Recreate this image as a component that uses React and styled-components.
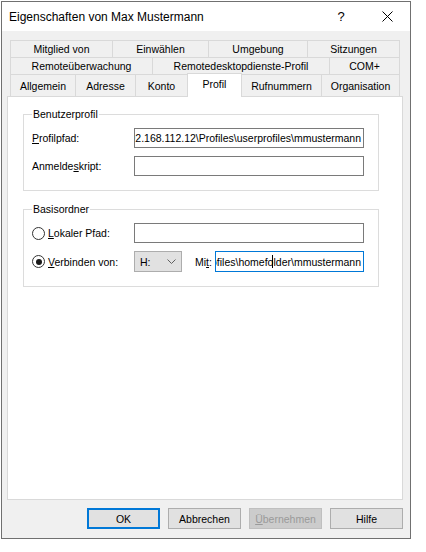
import styled, { createGlobalStyle } from 'styled-components';

const Global = createGlobalStyle`
  body {
    margin: 0;
    background: #fff;
    font-family: "Liberation Sans", Arial, sans-serif;
    font-size: 10.5px;
    color: #000;
  }
`;

const Window = styled.div`
  box-sizing: border-box;
  width: 410px;
  height: 538px;
  margin: 1px 0 0 1px;
  border: 1px solid #707070;
  background: #f0f0f0;
  display: flex;
  flex-direction: column;
`;

const TitleBar = styled.div`
  height: 29px;
  flex-shrink: 0;
  background: #fff;
  display: flex;
  align-items: center;
`;

const Title = styled.div`
  flex: 1;
  padding-left: 7px;
  font-size: 12px;
`;

const TitleButton = styled.div`
  width: 46px;
  height: 100%;
  display: flex;
  align-items: center;
  justify-content: center;
  font-size: 13px;
`;

const Body = styled.div`
  flex: 1;
  padding: 9px 7px 9px 5px;
  display: flex;
  flex-direction: column;
`;

const Tabs = styled.div`
  margin-left: 3px;
  display: flex;
  flex-direction: column;
`;

const TabRow = styled.div`
  display: flex;
  height: ${({ $h }) => $h}px;
`;

const Tab = styled.div`
  box-sizing: border-box;
  width: ${({ $w }) => $w}px;
  margin-left: -1px;
  border: 1px solid #d9d9d9;
  border-bottom: none;
  background: #f0f0f0;
  display: flex;
  align-items: center;
  justify-content: center;
  white-space: nowrap;

  &:first-child {
    margin-left: 0;
  }

  ${({ $active }) =>
    $active &&
    `
    position: relative;
    z-index: 1;
    background: #fff;
    margin-top: -1px;
    margin-bottom: -1px;
    padding-bottom: 4px;
  `}
`;

const Page = styled.div`
  box-sizing: border-box;
  height: 404px;
  border: 1px solid #d9d9d9;
  background: #fff;
  padding: 11px 0 0 15px;
`;

const Group = styled.fieldset`
  box-sizing: border-box;
  width: 356px;
  min-width: 0;
  margin: 0;
  padding: 7px 14px 14px 8px;
  border: 1px solid #dcdcdc;

  & + & {
    margin-top: 12px;
  }
`;

const Legend = styled.legend`
  padding: 0 1px;
  line-height: 13px;
`;

const Row = styled.div`
  display: flex;
  align-items: center;
  height: ${({ $h }) => $h || 20}px;

  & + & {
    margin-top: 8px;
  }
`;

const Label = styled.div`
  width: ${({ $w }) => $w || 102}px;
  flex-shrink: 0;
  box-sizing: border-box;
  padding-left: ${({ $pad }) => $pad || 0}px;
  display: flex;
  align-items: center;
  gap: 3px;
  white-space: nowrap;
`;

const Field = styled.div`
  box-sizing: border-box;
  width: ${({ $w }) => $w}px;
  height: 100%;
  border: 1px solid ${({ $focus }) => ($focus ? '#0078d7' : '#7a7a7a')};
  background: #fff;
  padding: 0 2px;
  display: flex;
  align-items: center;
  justify-content: flex-end;
  overflow: hidden;
  white-space: nowrap;
`;

const Caret = styled.span`
  display: inline-block;
  flex-shrink: 0;
  width: 1px;
  height: 13px;
  margin: 0 0 0 -1px;
  background: #000;
`;

const Radio = styled.span`
  box-sizing: border-box;
  flex-shrink: 0;
  width: 13px;
  height: 13px;
  border: 1px solid #333;
  border-radius: 50%;
  background: #fff;
  display: flex;
  align-items: center;
  justify-content: center;

  &::after {
    content: '';
    width: 6px;
    height: 6px;
    border-radius: 50%;
    background: ${({ $checked }) => ($checked ? '#1a1a1a' : 'transparent')};
  }
`;

const Select = styled.div`
  box-sizing: border-box;
  flex-shrink: 0;
  width: 48px;
  height: 100%;
  border: 1px solid #adadad;
  background: #e1e1e1;
  padding: 0 5px 0 5px;
  display: flex;
  align-items: center;
  justify-content: space-between;
`;

const Buttons = styled.div`
  margin-top: 8px;
  display: flex;
  justify-content: flex-end;
  gap: 8px;
`;

const Button = styled.div`
  box-sizing: border-box;
  width: 73px;
  height: 21px;
  border-style: solid;
  border-width: ${({ $default }) => ($default ? 2 : 1)}px;
  border-color: ${({ $disabled, $default }) =>
    $default ? '#0078d7' : $disabled ? '#bfbfbf' : '#adadad'};
  background: ${({ $disabled }) => ($disabled ? '#cccccc' : '#e1e1e1')};
  color: ${({ $disabled }) => ($disabled ? '#9a9a9a' : '#000')};
  display: flex;
  align-items: center;
  justify-content: center;
`;

const rows = [
  { h: 17, tabs: [['Mitglied von', 103], ['Einwählen', 97], ['Umgebung', 100], ['Sitzungen', 93]] },
  { h: 17, tabs: [['Remoteüberwachung', 143], ['Remotedesktopdienste-Profil', 178], ['COM+', 71]] },
  {
    h: 22,
    tabs: [
      ['Allgemein', 66],
      ['Adresse', 61],
      ['Konto', 53],
      ['Profil', 55, true],
      ['Rufnummern', 81],
      ['Organisation', 79],
    ],
  },
];

const profilePath = '\\\\192.168.112.12\\Profiles\\userprofiles\\mmustermann';

export default function App() {
  return (
    <>
      <Global />
      <Window>
        <TitleBar>
          <Title>Eigenschaften von Max Mustermann</Title>
          <TitleButton>?</TitleButton>
          <TitleButton>
            <svg width="11" height="11" viewBox="0 0 11 11">
              <path d="M0.5 0.5 L10.5 10.5 M10.5 0.5 L0.5 10.5" stroke="#000" strokeWidth="1" fill="none" />
            </svg>
          </TitleButton>
        </TitleBar>
        <Body>
          <Tabs>
            {rows.map((row, i) => (
              <TabRow key={i} $h={row.h}>
                {row.tabs.map(([name, w, active]) => (
                  <Tab key={name} $w={w} $active={active}>
                    {name}
                  </Tab>
                ))}
              </TabRow>
            ))}
          </Tabs>
          <Page>
            <Group>
              <Legend>Benutzerprofil</Legend>
              <Row>
                <Label>
                  <span>
                    <u>P</u>rofilpfad:
                  </span>
                </Label>
                <Field $w={230}>{profilePath}</Field>
              </Row>
              <Row>
                <Label>
                  <span>
                    Anmelde<u>s</u>kript:
                  </span>
                </Label>
                <Field $w={230} />
              </Row>
            </Group>
            <Group>
              <Legend>Basisordner</Legend>
              <Row>
                <Label>
                  <Radio />
                  <span>
                    <u>L</u>okaler Pfad:
                  </span>
                </Label>
                <Field $w={230} />
              </Row>
              <Row $h={21}>
                <Label>
                  <Radio $checked />
                  <span>
                    <u>V</u>erbinden von:
                  </span>
                </Label>
                <Select>
                  <span>H:</span>
                  <svg width="9" height="5" viewBox="0 0 9 5">
                    <path d="M0.5 0.5 L4.5 4.5 L8.5 0.5" stroke="#606060" strokeWidth="1" fill="none" />
                  </svg>
                </Select>
                <Label $w={33} $pad={13}>
                  <span>
                    Mi<u>t</u>:
                  </span>
                </Label>
                <Field $w={149} $focus>
                  <span>{'\\\\192.168.112.12\\Profiles\\homefo'}</span>
                  <Caret />
                  <span>{'lder\\mmustermann'}</span>
                </Field>
              </Row>
            </Group>
          </Page>
          <Buttons>
            <Button $default>OK</Button>
            <Button>Abbrechen</Button>
            <Button $disabled>
              <span>
                <u>Ü</u>bernehmen
              </span>
            </Button>
            <Button>Hilfe</Button>
          </Buttons>
        </Body>
      </Window>
    </>
  );
}
